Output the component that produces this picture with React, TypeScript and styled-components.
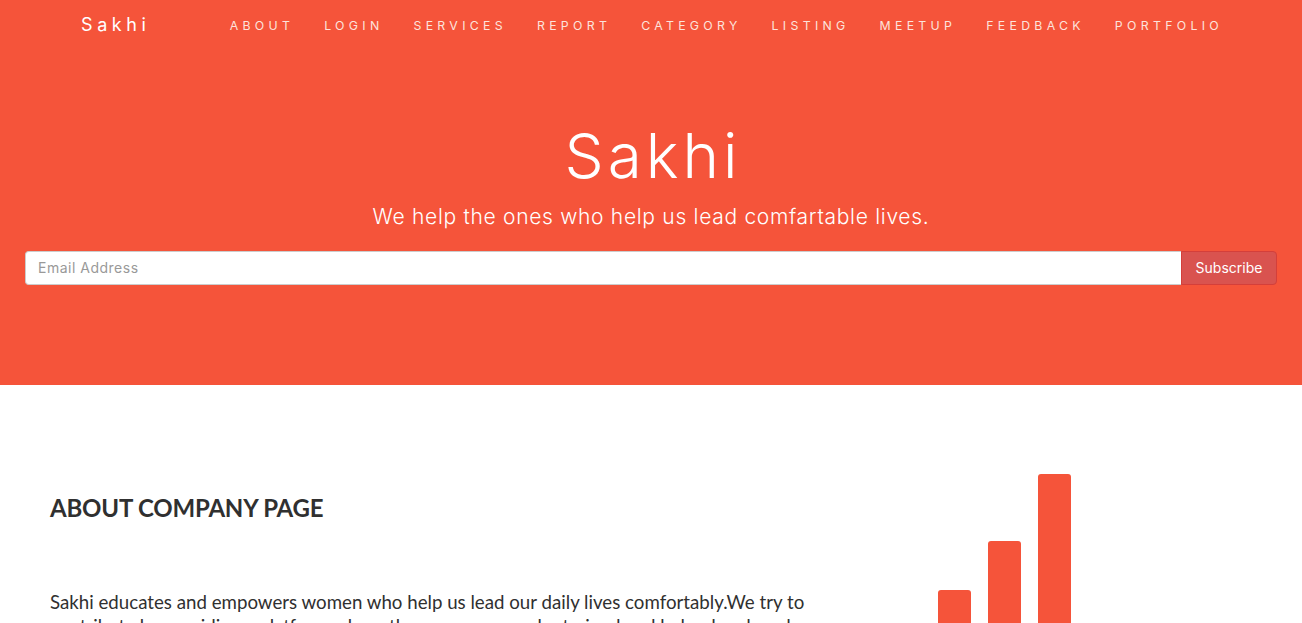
import React from "react";
import styled, { createGlobalStyle } from "styled-components";

const ACCENT = "#f5543a";

const GlobalStyle = createGlobalStyle`
  html, body { margin: 0; padding: 0; background: #fff; }
  body { font-family: Lato, "Open Sans", sans-serif; color: #303030; }
  * { box-sizing: border-box; }
`;

const Hero = styled.header`
  background: ${ACCENT};
  height: 385px;
  color: #fff;
  display: flex;
  flex-direction: column;
`;

const NavBar = styled.nav`
  height: 50px;
  display: flex;
  align-items: center;
  padding: 0 79px 4px 81px;
`;

const Brand = styled.a`
  font-family: Inter, "Noto Sans", sans-serif;
  font-size: 18px;
  font-weight: 400;
  letter-spacing: 4.6px;
  color: #fff;
  text-decoration: none;
  margin-top: 2px;
`;

const NavList = styled.ul`
  list-style: none;
  margin: 0 0 0 auto;
  padding: 0;
  display: flex;
  gap: 30px;
`;

const NavLink = styled.a`
  font-family: Inter, "Noto Sans", sans-serif;
  font-size: 12.3px;
  font-weight: 400;
  letter-spacing: 4.3px;
  color: #fde3dc;
  text-decoration: none;
`;

const HeroBody = styled.div`
  padding: 0 25px;
  display: flex;
  flex-direction: column;
  align-items: center;
`;

const Title = styled.h1`
  font-family: Inter, "Noto Sans", sans-serif;
  font-size: 62px;
  font-weight: 300;
  letter-spacing: 4px;
  padding-left: 4px;
  line-height: 1.1;
  margin: 72px 0 0;
`;

const Tagline = styled.p`
  font-family: Inter, "Noto Sans", sans-serif;
  font-size: 21px;
  font-weight: 300;
  letter-spacing: 0.7px;
  margin: 12px 0 0;
  line-height: 1.4;
`;

const Form = styled.form`
  display: flex;
  width: 100%;
  margin-top: 19px;
  height: 34px;
`;

const EmailInput = styled.input`
  flex: 1;
  height: 34px;
  border: 1px solid #ccc;
  border-right: none;
  border-radius: 4px 0 0 4px;
  padding: 6px 12px;
  font-family: Inter, "Noto Sans", sans-serif;
  font-size: 14px;
  letter-spacing: 0.5px;
  color: #555;
  outline: none;
  &::placeholder { color: #999; }
`;

const SubscribeButton = styled.button`
  width: 96px;
  height: 34px;
  background: #d9534f;
  border: 1px solid #d43f3a;
  border-radius: 0 4px 4px 0;
  color: #fff;
  font-family: Inter, "Noto Sans", sans-serif;
  font-size: 14px;
  padding: 0;
`;

const AboutSection = styled.section`
  padding: 89px 50px 0;
  display: grid;
  grid-template-columns: 806px 1fr;
  height: 238px;
  overflow: hidden;
`;

const TextCol = styled.div`
  display: flex;
  flex-direction: column;
`;

const Heading = styled.h2`
  font-family: Lato, sans-serif;
  font-weight: 700;
  font-size: 24px;
  letter-spacing: -0.2px;
  color: #303030;
  margin: 21px 0 0;
  line-height: 1.1;
`;

const Lead = styled.p`
  font-family: Lato, sans-serif;
  font-size: 18.7px;
  line-height: 24px;
  color: #303030;
  margin: 69px 0 0;
  max-width: 790px;
`;

const IconCol = styled.div`
  display: flex;
  justify-content: flex-start;
  padding-left: 82px;
`;

const SignalIcon = () => (
  <svg width="134" height="160" viewBox="0 0 134 160" aria-hidden="true">
    <rect x="0" y="116" width="33" height="60" rx="3" fill={ACCENT} />
    <rect x="50" y="67" width="33" height="110" rx="3" fill={ACCENT} />
    <rect x="100" y="0" width="33" height="180" rx="3" fill={ACCENT} />
  </svg>
);

const links = ["ABOUT", "LOGIN", "SERVICES", "REPORT", "CATEGORY", "LISTING", "MEETUP", "FEEDBACK", "PORTFOLIO"];

export default function App() {
  return (
    <>
      <GlobalStyle />
      <Hero>
        <NavBar>
          <Brand href="#">Sakhi</Brand>
          <NavList>
            {links.map((l) => (
              <li key={l}>
                <NavLink href="#">{l}</NavLink>
              </li>
            ))}
          </NavList>
        </NavBar>
        <HeroBody>
          <Title>Sakhi</Title>
          <Tagline>We help the ones who help us lead comfartable lives.</Tagline>
          <Form onSubmit={(e) => e.preventDefault()}>
            <EmailInput type="email" placeholder="Email Address" />
            <SubscribeButton type="button">Subscribe</SubscribeButton>
          </Form>
        </HeroBody>
      </Hero>
      <AboutSection>
        <TextCol>
          <Heading>ABOUT COMPANY PAGE</Heading>
          <Lead>
            Sakhi educates and empowers women who help us lead our daily lives comfortably.We try to
            contribute by providing a platform where these women can be trained and helped and made aware about their rights.
          </Lead>
        </TextCol>
        <IconCol>
          <SignalIcon />
        </IconCol>
      </AboutSection>
    </>
  );
}
